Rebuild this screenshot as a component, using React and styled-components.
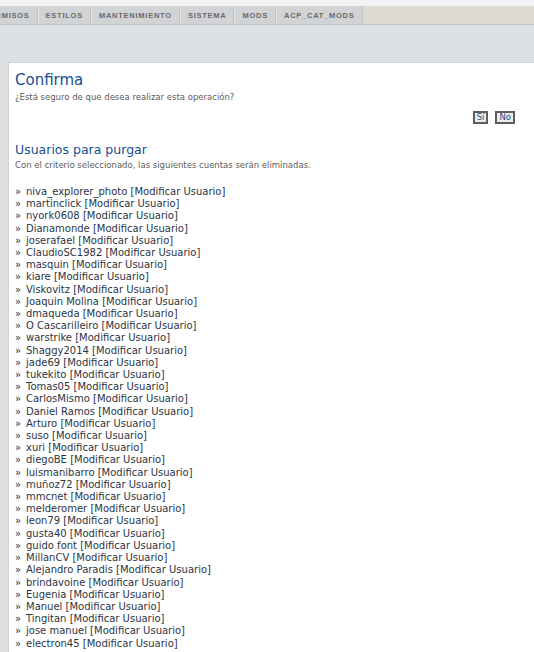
import React from 'react'
import styled, { createGlobalStyle } from 'styled-components'

const Global = createGlobalStyle`
  html, body { margin:0; padding:0; background:#dde0e3; }
  body { font-family:"DejaVu Sans", Verdana, sans-serif; overflow:hidden; }
`

const tabs = ['PERMISOS','ESTILOS','MANTENIMIENTO','SISTEMA','MODS','ACP_CAT_MODS']

const users = [
  'niva_explorer_photo','martinclick','nyork0608','Dianamonde','joserafael','ClaudioSC1982',
  'masquin','kiare','Viskovitz','Joaquin Molina','dmaqueda','O Cascarilleiro','warstrike',
  'Shaggy2014','jade69','tukekito','Tomas05','CarlosMismo','Daniel Ramos','Arturo','suso',
  'xuri','diegoBE','luismanibarro','muñoz72','mmcnet','melderomer','leon79','gusta40',
  'guido font','MillanCV','Alejandro Paradis','brindavoine','Eugenia','Manuel','Tingitan',
  'jose manuel','electron45'
]

const App = () => {
  return (
    <Page>
      <Global />
      <TopStrip />
      <TabBar>
        <TabRow>
          {tabs.map(t => <Tab key={t}>{t}</Tab>)}
        </TabRow>
      </TabBar>
      <Panel>
        <Title>Confirma</Title>
        <Note>¿Está seguro de que desea realizar esta operación?</Note>
        <Actions>
          <Btn>Sí</Btn>
          <Btn>No</Btn>
        </Actions>
        <SubTitle>Usuarios para purgar</SubTitle>
        <Note>Con el criterio seleccionado, las siguientes cuentas serán eliminadas.</Note>
        <List>
          {users.map(u => (
            <Item key={u}><Raquo>»</Raquo>{u} <Link>[Modificar Usuario]</Link></Item>
          ))}
        </List>
      </Panel>
    </Page>
  )
}

export default App

const Page = styled.div`
  width:534px;
  height:652px;
  overflow:hidden;
`
const TopStrip = styled.div`
  height:6px;
  background:#f2f2f2;
`
const TabBar = styled.div`
  height:18px;
  background:#dedbd3;
  border-bottom:1px solid #c4c4c4;
  overflow:hidden;
`
const TabRow = styled.div`
  display:flex;
  margin-left:-24px;
  height:100%;
`
const Tab = styled.div`
  height:18px;
  line-height:19px;
  padding:0 7px;
  background:#d2d3d4;
  border-right:1px solid #c2c2c2;
  border-left:1px solid #e4e4e4;
  font-family:"Liberation Sans", Arial, sans-serif;
  font-size:7.5px;
  font-weight:bold;
  letter-spacing:0.75px;
  color:#666a6d;
  white-space:nowrap;
`
const Panel = styled.div`
  margin:37px 0 0 8px;
  background:#fff;
  border-top:1px solid #d0d3d6;
  border-left:1px solid #d0d3d6;
  padding:6px 0 0 6px;
  height:600px;
`
const Title = styled.h1`
  margin:0;
  font-weight:normal;
  font-size:15px;
  line-height:22px;
  color:#164f92;
`
const SubTitle = styled.h2`
  margin:0;
  font-weight:normal;
  font-size:12.5px;
  line-height:18px;
  color:#164f92;
`
const Note = styled.p`
  margin:0;
  font-size:8.5px;
  line-height:12px;
  color:#5c5c5c;
`
const Actions = styled.div`
  display:flex;
  justify-content:flex-end;
  gap:7px;
  padding-right:19px;
  margin:8px 0 17px;
`
const Btn = styled.span`
  display:inline-block;
  border:2px solid #5e5e5e;
  background:#ececec;
  font-size:8.5px;
  line-height:9px;
  padding:0 2px;
  color:#1f4f8a;
`
const List = styled.ul`
  list-style:none;
  margin:15px 0 0;
  padding:0;
`
const Item = styled.li`
  font-size:10px;
  line-height:12.2px;
  color:#2c3544;
  white-space:nowrap;
`
const Raquo = styled.span`
  display:inline-block;
  width:11px;
  color:#2c3544;
`
const Link = styled.span`
  color:#2c3544;
`
